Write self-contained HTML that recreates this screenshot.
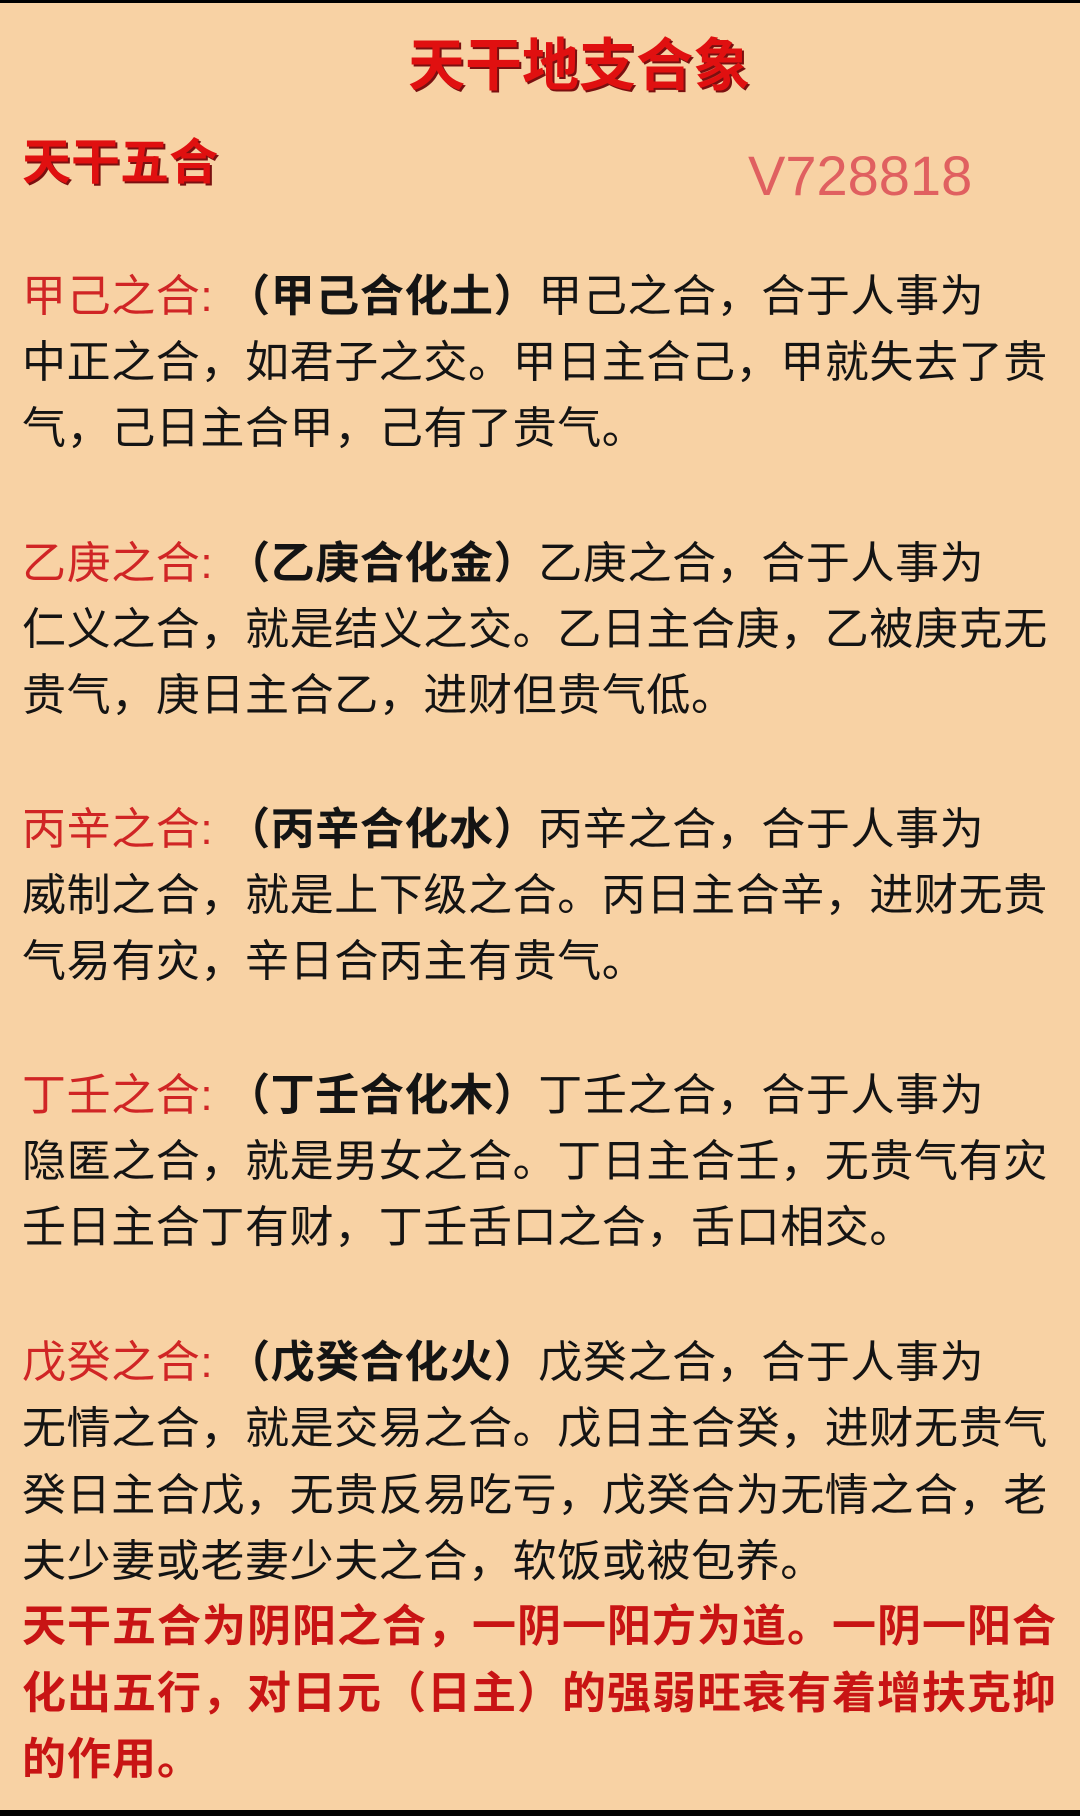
<!DOCTYPE html>
<html><head><meta charset="utf-8"><style>
html,body{margin:0;padding:0}
body{width:1080px;height:1816px;position:relative;background:#f8d2a4;overflow:hidden;font-family:"Liberation Sans","Noto Sans CJK SC",sans-serif}
.bar{position:absolute;left:0;width:1080px;background:#000}
.l{position:absolute;left:22px;height:66px;line-height:66px;font-size:44px;color:#141414;white-space:nowrap;letter-spacing:0.6px}
.r{color:#d02525}
.b{font-weight:bold}
.rb{color:#c81414;font-weight:bold;letter-spacing:1px}
</style></head><body>
<div class="bar" style="top:0;height:3px"></div>
<div class="bar" style="top:1810px;height:6px"></div>
<div style="position:absolute;left:408px;top:30px;font-size:57px;font-weight:bold;color:#e01010;line-height:72px;letter-spacing:0px;text-shadow:2px 2px 0 #7a1010;white-space:nowrap">天干地支合象</div>
<div style="position:absolute;left:22px;top:134px;font-size:49px;font-weight:bold;color:#e01010;line-height:58px;text-shadow:2px 2px 0 #7a1010">天干五合</div>
<div style="position:absolute;left:748px;top:145px;font-size:56px;color:#e06060;line-height:62px">V728818</div>

<div class="l" style="top:264px"><span class="r">甲己之合:</span> <span class="b">（甲己合化土）</span>甲己之合，合于人事为</div>
<div class="l" style="top:330px">中正之合，如君子之交。甲日主合己，甲就失去了贵</div>
<div class="l" style="top:396px">气，己日主合甲，己有了贵气。</div>

<div class="l" style="top:531px"><span class="r">乙庚之合:</span> <span class="b">（乙庚合化金）</span>乙庚之合，合于人事为</div>
<div class="l" style="top:597px">仁义之合，就是结义之交。乙日主合庚，乙被庚克无</div>
<div class="l" style="top:663px">贵气，庚日主合乙，进财但贵气低。</div>

<div class="l" style="top:797px"><span class="r">丙辛之合:</span> <span class="b">（丙辛合化水）</span>丙辛之合，合于人事为</div>
<div class="l" style="top:863px">威制之合，就是上下级之合。丙日主合辛，进财无贵</div>
<div class="l" style="top:929px">气易有灾，辛日合丙主有贵气。</div>

<div class="l" style="top:1063px"><span class="r">丁壬之合:</span> <span class="b">（丁壬合化木）</span>丁壬之合，合于人事为</div>
<div class="l" style="top:1129px">隐匿之合，就是男女之合。丁日主合壬，无贵气有灾</div>
<div class="l" style="top:1195px">壬日主合丁有财，丁壬舌口之合，舌口相交。</div>

<div class="l" style="top:1330px"><span class="r">戊癸之合:</span> <span class="b">（戊癸合化火）</span>戊癸之合，合于人事为</div>
<div class="l" style="top:1396px">无情之合，就是交易之合。戊日主合癸，进财无贵气</div>
<div class="l" style="top:1463px">癸日主合戊，无贵反易吃亏，戊癸合为无情之合，老</div>
<div class="l" style="top:1529px">夫少妻或老妻少夫之合，软饭或被包养。</div>
<div class="l rb" style="top:1594px">天干五合为阴阳之合，一阴一阳方为道。一阴一阳合</div>
<div class="l rb" style="top:1661px">化出五行，对日元（日主）的强弱旺衰有着增扶克抑</div>
<div class="l rb" style="top:1727px">的作用。</div>
</body></html>
